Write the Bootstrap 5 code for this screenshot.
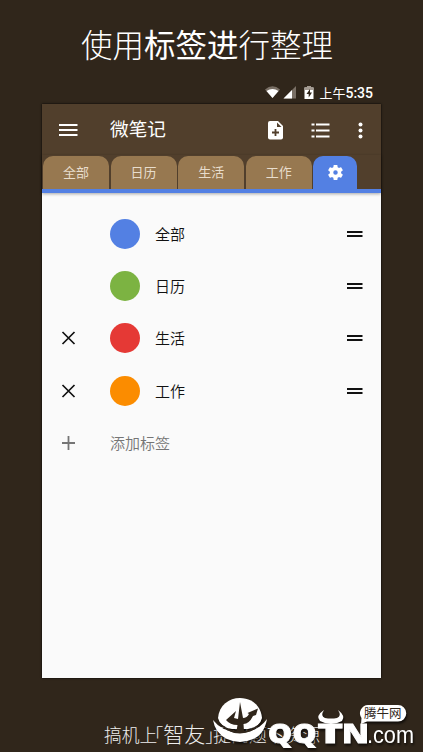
<!DOCTYPE html>
<html lang="zh-CN">
<head>
<meta charset="utf-8">
<meta name="viewport" content="width=device-width, initial-scale=1">
<title>微笔记</title>
<link href="https://cdn.jsdelivr.net/npm/bootstrap@5.3.0/dist/css/bootstrap.min.css" rel="stylesheet">
<style>
body{background:#30261b;font-family:Roboto,"Noto Sans CJK SC",sans-serif;height:752px;overflow:hidden}
.headline{height:82px;padding:20px 9px 0 0;font-size:31.5px;line-height:46px;font-weight:300;font-family:"Noto Sans CJK SC",sans-serif}
.headline b{font-weight:400}
.statusbar{height:22px;width:331px;margin-left:42px;font-size:14px;line-height:22px;font-weight:500}
.ampm{font-weight:400;font-size:13px}
.phone{width:339px;height:574px;margin-left:42px;background:#fafafa;box-shadow:0 0 2px #000}
.appbar{height:51px;background:#513f2c;padding-left:17px}
.appname{font-size:18.700px;line-height:51px;margin-left:32px;padding-top:2px}
.tabs{height:38px;background:#513f2c;border-bottom:4px solid #5380e3;padding:1px 0 0 1px;gap:1.600px;box-shadow:0 1px 3px #0005}
.tab{width:66px;height:33px;border-radius:10px 10px 0 0;background:#977850;color:#e8ddcd;font-size:13px;line-height:34px}
.tab.active{width:44px;background:#5380e3}
.rows{padding-top:15px}
.item{height:52.200px;color:#111;font-size:15px}
.caption-text{font-weight:350;line-height:22px;font-family:"Noto Sans CJK SC",sans-serif}
.lead-icon{width:68px;padding-left:19px}
.dot{width:30px;height:30px;margin-right:15px}
.muted{color:#757575}
.footer-area{height:74px}
.slogan{padding:41px 0 0 104px;font-size:17.800px;line-height:30px;font-weight:300;color:#eee;font-family:"Noto Sans CJK SC",sans-serif}
.slogan .big{font-size:21px;line-height:29px}
.quote{width:8px;display:flex}
.quote.open{justify-content:flex-end;width:6px}
.logo{left:205px;top:12px}
svg{display:block;flex:none}
.logo>g{filter:drop-shadow(1px 2px 1px #000a)}
</style>
<script src="https://cdn.jsdelivr.net/npm/bootstrap@5.3.0/dist/js/bootstrap.bundle.min.js"></script>
</head>
<body class="m-0">
<h1 class="headline text-center text-white m-0">使用<b>标签进</b>行整理</h1>
<div class="statusbar d-flex justify-content-end text-white">
<svg width="54" height="22" viewBox="0 0 54 22"><path d="M0 7.500Q7.500 1 15 7.500L7.500 16Z" fill="#796f65"/><path d="M1.500 9Q7.500 5 13.500 9L7.500 16Z" fill="#fff"/><path d="M18.500 16.500L31 4V16.500Z" fill="#796f65"/><path d="M18.500 16.500L27 8V16.500Z" fill="#fff"/><path d="M39.500 5.500h2.500V4h4v1.500H48.500V17h-9Z" fill="#fff"/><path d="M39.500 5.500h2.500V4h4v1.500H48.500V8h-9Z" fill="#a49b92"/><path d="M45 7l-3.500 5h2.200v3.500l3.300-5h-2Z" fill="#30261b"/></svg>
<span><span class="ampm">上午</span>5:35</span>
</div>
<main class="phone">
<header class="appbar d-flex align-items-center text-white">
<svg width="19" height="16" stroke="#fff" stroke-width="2"><path d="M0 3h18.500M0 8h18.500M0 13h18.500"/></svg>
<span class="appname me-auto">微笔记</span>
<svg width="115.500" height="24" viewBox="0 0 115.500 24"><path d="M4 3h8l5 5v11.500q0 2-2 2H4q-2 0-2-2V5q0-2 2-2Z" fill="#fff"/><path d="M11 4.500V9H15.500Z" fill="#513f2c"/><path d="M9.500 11v7M6 14.500h7" stroke="#513f2c" stroke-width="1.800"/><path d="M45.500 6.500h3M45.500 12.500h3M45.500 18.500h3M50 6.500h13.500M50 12.500h13.500M50 18.500h13.500" stroke="#fff" stroke-width="2"/><g fill="#fff"><circle cx="94.500" cy="6.500" r="2"/><circle cx="94.500" cy="12.500" r="2"/><circle cx="94.500" cy="18.500" r="2"/></g></svg>
</header>
<nav class="tabs d-flex">
<div class="tab text-center">全部</div><div class="tab text-center">日历</div><div class="tab text-center">生活</div><div class="tab text-center">工作</div>
<div class="tab active d-flex align-items-center justify-content-center"><svg width="15" height="15" viewBox="2 2 20 20"><path fill="#fff" d="M19.430 12.980c.04-.32.07-.64.07-.98s-.03-.66-.07-.98l2.110-1.650c.19-.15.24-.42.12-.64l-2-3.460c-.12-.22-.39-.3-.61-.22l-2.490 1c-.52-.4-1.080-.73-1.690-.98l-.38-2.650C14.460 2.180 14.250 2 14 2h-4c-.25 0-.46.18-.49.42l-.38 2.650c-.61.25-1.170.59-1.690.98l-2.490-1c-.23-.09-.49 0-.61.22l-2 3.460c-.13.22-.07.49.12.64l2.110 1.650c-.04.32-.07.65-.07.98s.03.66.07.98l-2.110 1.650c-.19.15-.24.42-.12.64l2 3.460c.12.22.39.3.61.22l2.490-1c.52.4 1.080.73 1.690.98l.38 2.650c.03.24.24.42.49.42h4c.25 0 .46-.18.49-.42l.38-2.650c.61-.25 1.170-.59 1.690-.98l2.490 1c.23.09.49 0 .61-.22l2-3.460c.12-.22.07-.49-.12-.64ZM12 15a3 3 0 1 1 0-6 3 3 0 0 1 0 6Z"/></svg></div>
</nav>
<section class="rows">
<div class="item d-flex align-items-center"><span class="lead-icon"></span><span class="dot rounded-circle" style="background:#5380e3"></span><span class="caption-text me-auto">全部</span><svg width="34" height="10" stroke="#111" stroke-width="2"><path d="M0 3h15.500M0 7h15.500"/></svg></div>
<div class="item d-flex align-items-center"><span class="lead-icon"></span><span class="dot rounded-circle" style="background:#7cb342"></span><span class="caption-text me-auto">日历</span><svg width="34" height="10" stroke="#111" stroke-width="2"><path d="M0 3h15.500M0 7h15.500"/></svg></div>
<div class="item d-flex align-items-center"><span class="lead-icon"><svg width="16" height="14" stroke="#111" stroke-width="1.700"><path d="M1.500 1l12 12M13.500 1L1.500 13"/></svg></span><span class="dot rounded-circle" style="background:#e53935"></span><span class="caption-text me-auto">生活</span><svg width="34" height="10" stroke="#111" stroke-width="2"><path d="M0 3h15.500M0 7h15.500"/></svg></div>
<div class="item d-flex align-items-center"><span class="lead-icon"><svg width="16" height="14" stroke="#111" stroke-width="1.700"><path d="M1.500 1l12 12M13.500 1L1.500 13"/></svg></span><span class="dot rounded-circle" style="background:#fb8c00"></span><span class="caption-text me-auto">工作</span><svg width="34" height="10" stroke="#111" stroke-width="2"><path d="M0 3h15.500M0 7h15.500"/></svg></div>
<div class="item muted d-flex align-items-center"><span class="lead-icon"><svg width="16" height="14" stroke="#757575" stroke-width="1.800"><path d="M7.500 0v14M1 7h13"/></svg></span><span class="caption-text">添加标签</span></div>
</section>
</main>
<footer class="footer-area position-relative overflow-hidden">
<div class="slogan d-flex text-nowrap"><span>搞机上</span><span class="quote open">「</span><span class="big">智友</span><span class="quote">」</span><span>提问题下资源</span></div>
<svg class="logo position-absolute" width="218" height="62" viewBox="205 690 218 62">
<g fill="#fff">
<path d="M218 718C219 705 229 698 240 698S261 705 262 718Q260 727 248 729H232Q220 727 218 718Z"/>
<path d="M213 720Q222 732 240 733Q258 732 267 719Q264 735 253 739Q240 745 227 739Q215 733 213 720Z"/>
<path d="M240 702L243 718Q247 718 249 714L247.500 713 258 708.500 256 715 253 716Q249 724 243.500 724L244 731Q254 730 261 722Q255 733 240 733.500Q225 733 219 722Q226 730 236.500 731L237.500 725Q230 725 226 720L236 711 234 718 238 719Z" fill="#30261b"/>
<path d="M324 710Q315 716 320 721Q331 727 342 721Q346 716 338 710Q342 716 337 718Q331 719 325 718Q320 716 324 710Z"/>
<g font-family="Open Sans,sans-serif" font-weight="800" font-size="26" stroke="#fff" stroke-width=".8"><text x="268" y="743" textLength="24" lengthAdjust="spacingAndGlyphs">Q</text><text x="292.500" y="743" textLength="24" lengthAdjust="spacingAndGlyphs">Q</text><text x="317.500" y="743" textLength="25.500" lengthAdjust="spacingAndGlyphs">T</text><text x="342" y="743" textLength="27" lengthAdjust="spacingAndGlyphs">N</text></g>
<text x="367" y="742.500" font-family="Liberation Sans,Arial,sans-serif" font-size="23" textLength="47" lengthAdjust="spacingAndGlyphs">.com</text>
<path d="M368 705H398A8.300 8.300 0 0 1 398 721.600H367L361 724 361.500 718A8.300 8.300 0 0 1 368 705Z"/>
</g>
<text x="364" y="718" font-family="Noto Sans CJK SC,sans-serif" font-size="12.500" fill="#30261b">腾牛网</text>
</svg>
</footer>
</body>
</html>
